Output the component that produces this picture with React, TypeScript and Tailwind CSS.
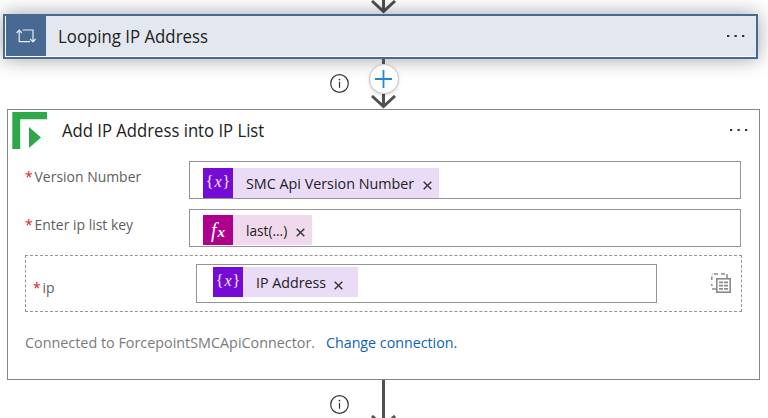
import React from 'react';

function InfoIcon() {
  return (
    <svg width="20" height="20" viewBox="0 0 20 20" fill="none">
      <circle cx="10.5" cy="10.5" r="8.8" stroke="#333" strokeWidth="1.2" />
      <path d="M10.5 8.8V14.8" stroke="#333" strokeWidth="1.2" />
      <circle cx="10.5" cy="6.6" r="0.9" fill="#333" />
    </svg>
  );
}

function ArrowHead() {
  return (
    <svg width="25" height="14" viewBox="0 0 25 14" fill="none" className="shrink-0">
      <path d="M12.5 0V12" stroke="#505050" strokeWidth="3" />
      <path d="M1 1L12.5 11.5L24 1" stroke="#505050" strokeWidth="3" />
    </svg>
  );
}

function Dots() {
  return (
    <svg width="18" height="2" viewBox="0 0 18 2" fill="#333">
      <rect x="0" width="2.3" height="2" />
      <rect x="7.5" width="2.3" height="2" />
      <rect x="15" width="2.3" height="2" />
    </svg>
  );
}

function Close() {
  return (
    <svg width="9" height="9" viewBox="0 0 9 9" fill="none" className="shrink-0">
      <path d="M0.7 0.7L8.3 8.3M8.3 0.7L0.7 8.3" stroke="#333" strokeWidth="1.4" />
    </svg>
  );
}

function VariableTile() {
  return (
    <span className="flex h-[30px] w-[30px] shrink-0 items-center justify-center bg-[#770bd6] pb-0.5 font-['Liberation_Serif',serif] text-[16px] leading-none font-normal text-[#f3eafc]">
      {'{'}
      <i className="px-px">x</i>
      {'}'}
    </span>
  );
}

function FunctionTile() {
  return (
    <span className="flex h-[30px] w-[30px] shrink-0 items-baseline justify-center bg-[#ad008c] pt-[5px] font-['Liberation_Serif',serif] text-[20px] leading-none font-normal text-white italic">
      <span className="pr-px">f</span>
      <span className="text-[15px] font-bold">x</span>
    </span>
  );
}

function Label({ children }: { children: React.ReactNode }) {
  return (
    <span className="flex origin-left scale-x-[0.93] whitespace-nowrap text-[15px] leading-5 text-[#605e5c]">
      <span className="mr-[2px] text-[#e81123]">*</span>
      {children}
    </span>
  );
}

export default function App() {
  return (
    <div className="flex h-[418px] w-[768px] flex-col overflow-hidden bg-white font-['Open_Sans','Noto_Sans',sans-serif] font-normal text-[#222]">
      <div className="flex h-[14px] shrink-0 pl-[371px]">
        <ArrowHead />
      </div>

      <header className="ml-[3px] flex h-[45px] w-[755px] shrink-0 items-start border-2 border-[#486991] bg-white pl-px shadow-[0_0_20px_rgba(0,0,0,0.38)]">
        <div className="flex h-10 w-10 items-center justify-center bg-[#486991]">
          <svg width="20" height="14" viewBox="0 0 20 14" fill="none" stroke="#e8edf4" strokeWidth="1.2">
            <path d="M0.6 4L3.2 1.2L5.8 4M3.2 1.5V12.6H14" />
            <path d="M6.5 1H17V12.5M14.2 10L17 12.8L19.6 10" />
          </svg>
        </div>
        <div className="flex h-10 flex-1 items-center justify-between bg-[#e3e7ef] pr-[11px] pl-3">
          <h1 className="origin-left scale-x-[0.96] whitespace-nowrap text-[17.5px] leading-6">Looping IP Address</h1>
          <Dots />
        </div>
      </header>

      <div className="flex h-[50px] shrink-0 pl-[329px]">
        <div className="mt-[14px] h-5 w-5 shrink-0">
          <InfoIcon />
        </div>
        <div className="ml-5 flex w-[30px] flex-col items-start">
          <div className="ml-[13px] h-[5px] w-[3px] shrink-0 bg-[#505050]" />
          <div className="z-10 flex h-[30px] w-[30px] shrink-0 items-center justify-center rounded-full border border-[#c8c8c8] bg-white shadow-[0_1px_3px_rgba(0,0,0,0.2)]">
            <svg width="18" height="18" viewBox="0 0 18 18">
              <path d="M8.5 0V18M0 9H17" stroke="#2388d9" strokeWidth="1.8" />
            </svg>
          </div>
          <div className="ml-[13px] h-px w-[3px] shrink-0 bg-[#505050]" />
          <div className="ml-[2px] flex shrink-0">
            <ArrowHead />
          </div>
        </div>
      </div>

      <main className="ml-[7px] flex h-[271px] w-[753px] shrink-0 flex-col border border-[#868686] bg-white">
        <div className="flex h-[51px] shrink-0 items-start pt-0.5 pr-[11px] pl-1">
          <svg width="36" height="37" viewBox="0 0 36 37" fill="#2ea84a">
            <path d="M0.3 0H35V7.2H8.2V37H0.3Z" />
            <path d="M17 15L29 25.5L17 36Z" />
          </svg>
          <h2 className="mt-[6px] ml-[14px] origin-left scale-x-[0.953] whitespace-nowrap text-[17.5px] leading-6">Add IP Address into IP List</h2>
          <div className="mt-[17px] ml-auto">
            <Dots />
          </div>
        </div>

        <div className="flex h-12 shrink-0 pl-[17px]">
          <div className="w-[164px] pt-[5px]">
            <Label>Version Number</Label>
          </div>
          <div className="flex h-[38px] w-[552px] border border-[#949494] pt-1.5 pl-[13px]">
            <div className="flex h-[30px] w-[236px] items-center bg-[#eadbf7]">
              <VariableTile />
              <span className="ml-[13px] w-[177px] origin-left scale-x-[0.955] whitespace-nowrap text-[15px]">SMC Api Version Number</span>
              <span className="pt-1"><Close /></span>
            </div>
          </div>
        </div>

        <div className="flex h-[46px] shrink-0 pl-[17px]">
          <div className="w-[164px] pt-[5px]">
            <Label>Enter ip list key</Label>
          </div>
          <div className="flex h-[38px] w-[552px] border border-[#949494] pt-[5px] pl-[13px]">
            <div className="flex h-[30px] w-[109px] items-center bg-[#f1d9ed]">
              <FunctionTile />
              <span className="ml-[13px] w-[50px] origin-left scale-x-[0.91] whitespace-nowrap text-[15px]">last(...)</span>
              <span className="pt-1"><Close /></span>
            </div>
          </div>
        </div>

        <div className="ml-[17px] flex h-[57px] w-[717px] shrink-0 border border-dashed border-[#949494]">
          <div className="w-[170px] pt-[21px] pl-[7px]">
            <Label>ip</Label>
          </div>
          <div className="mt-2 flex h-[39px] w-[461px] border border-[#949494] pt-0.5 pl-4">
            <div className="flex h-[30px] w-[145px] items-center bg-[#eadbf7]">
              <VariableTile />
              <span className="ml-[13px] w-[78px] origin-left scale-x-[0.95] whitespace-nowrap text-[15px]">IP Address</span>
              <span className="pt-[7px]"><Close /></span>
            </div>
          </div>
          <svg className="mt-[17px] ml-[54px]" width="20" height="20" viewBox="0 0 20 20" fill="none">
            <path d="M0.8 13V11M0.8 7V3.5M0.8 1H1.5M3 1H7M10 1H14M16 1V5M1 16H5" stroke="#8a8a8a" strokeWidth="1.5" />
            <rect x="5.8" y="5.8" width="13.4" height="13.4" fill="white" stroke="#8a8a8a" strokeWidth="1.6" />
            <path d="M8 9.3H12M13 9.3H17M8 12.6H12M13 12.6H17M8 15.9H12M13 15.9H17" stroke="#8a8a8a" strokeWidth="1.7" />
          </svg>
        </div>

        <footer className="flex pt-5 pl-[17px] text-[15px] leading-5 whitespace-nowrap">
          <span className="w-[301px] origin-left scale-x-[0.957] text-[#7a7a7a]">Connected to ForcepointSMCApiConnector.</span>
          <a className="origin-left scale-x-[0.95] text-[#0f62b5]">Change connection.</a>
        </footer>
      </main>

      <div className="flex h-[38px] shrink-0 overflow-hidden pl-[329px]">
        <div className="mt-[14px] h-5 w-5 shrink-0">
          <InfoIcon />
        </div>
        <div className="ml-[22px] flex w-[25px] shrink-0 flex-col items-center">
          <div className="h-[35px] w-[3px] shrink-0 bg-[#505050]" />
          <ArrowHead />
        </div>
      </div>
    </div>
  );
}
